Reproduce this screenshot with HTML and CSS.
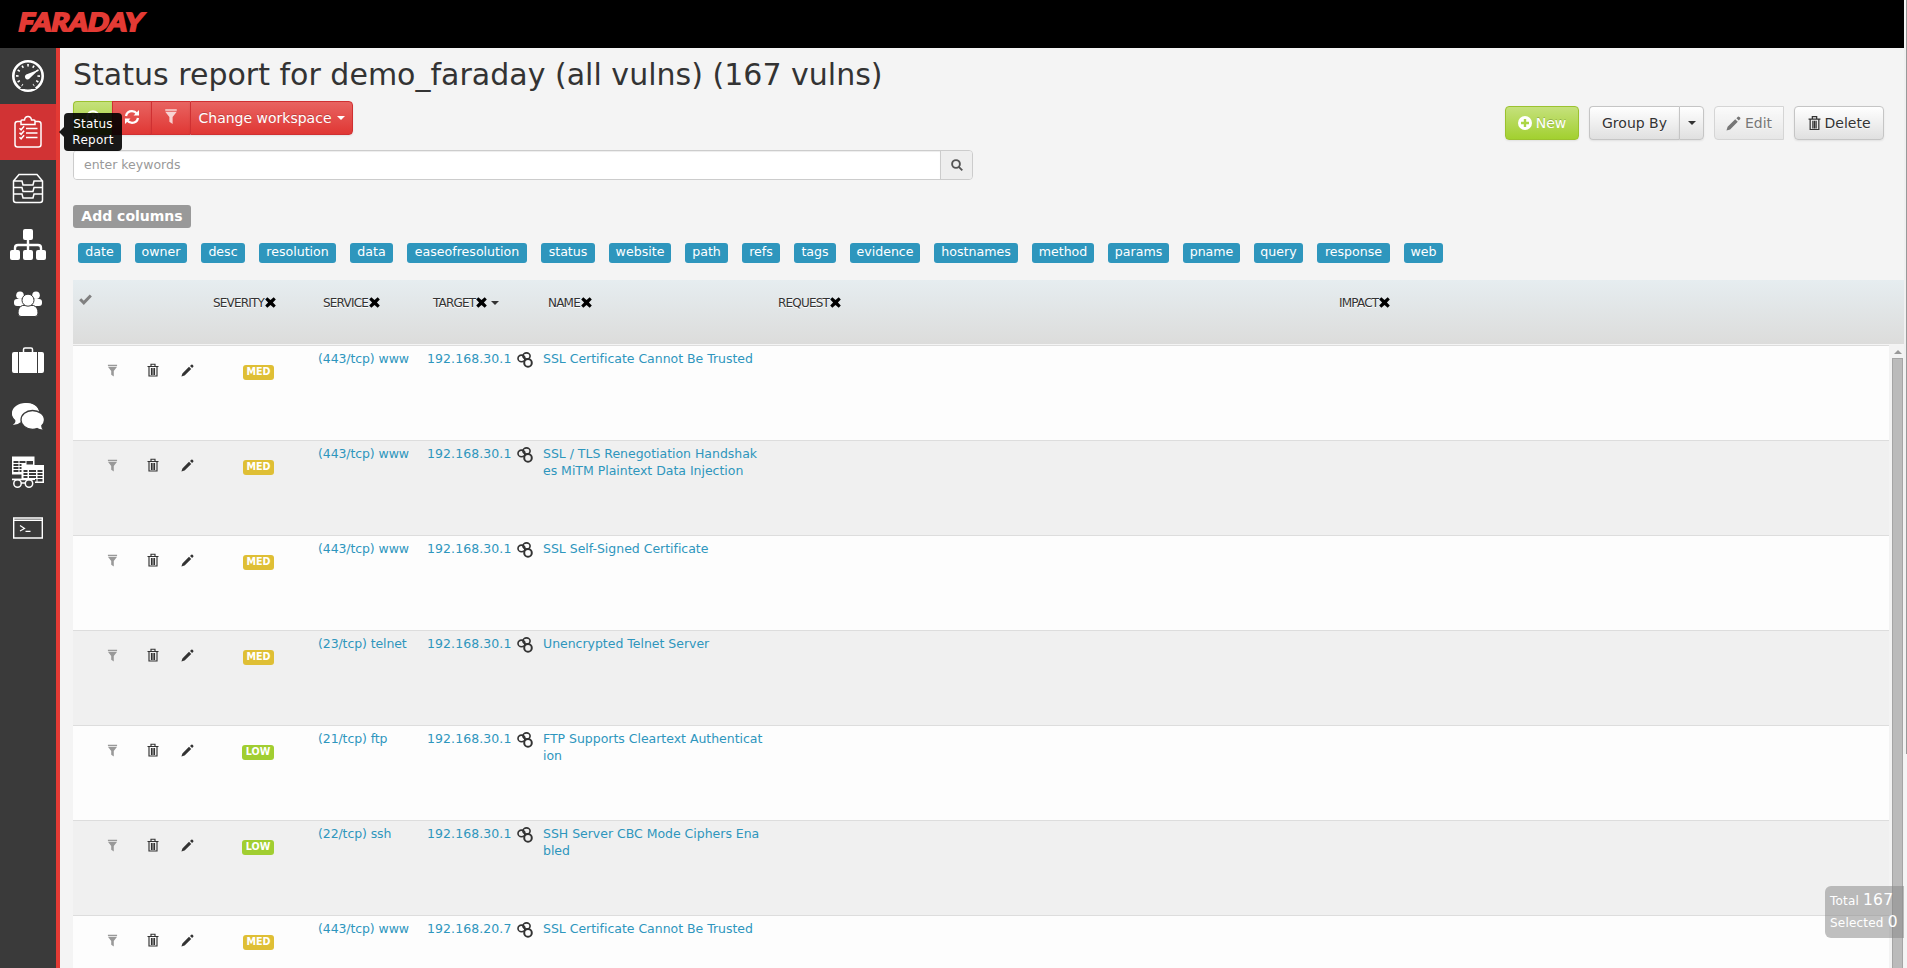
FILE: index.html
```
<!DOCTYPE html>
<html lang="en">
<head>
<meta charset="utf-8">
<title>Faraday - Status Report</title>
<link rel="stylesheet" href="styles.css">
</head>
<body>
<svg class="defs" aria-hidden="true">
  <symbol id="filter" viewBox="0 0 12 13"><path d="M1 .2h10v1.300H1zM1 2.300h10L7.400 7v6L4.600 11V7z"/></symbol>
  <symbol id="trash" viewBox="0 0 12 14"><path fill="none" stroke="currentColor" stroke-width="1.150" d="M.5 3.500h11M4 3V1.200h4V3M2 4v9h8V4M4.500 5v7M6 5v7M7.500 5v7"/></symbol>
  <symbol id="pencil" viewBox="0 0 13 13"><path d="M.4 12.600l1-3.200L8 2.800 10.200 5l-6.600 6.600zM9 1.900l1.300-1.200q.6-.5 1.300.1l.6.600q.6.700.1 1.300L11.100 4z"/></symbol>
  <symbol id="close" viewBox="0 0 11 11"><path d="M2.300.3L5.500 3.100 8.700.3l2.100 2.100-2.900 3.100 2.900 3.100-2.100 2.100-3.200-2.800-3.200 2.800L.2 8.600l2.900-3.100L.2 2.400z"/></symbol>
  <symbol id="link" viewBox="0 0 16 16"><g fill="none" stroke="currentColor"><ellipse cx="4.500" cy="6.400" rx="3.500" ry="3.300" stroke-width="1.600"/><ellipse cx="9.500" cy="4" rx="3.600" ry="3.100" stroke-width="1.600"/><circle cx="11" cy="10.900" r="3.800" stroke-width="2"/></g></symbol>
</svg>
<header class="topbar">
  <svg class="logo" width="130" height="26" viewBox="0 0 130 26"><text x="0" y="22" textLength="124" lengthAdjust="spacingAndGlyphs" transform="skewX(-12) translate(5 0)">FARADAY</text></svg>
</header>
<div class="shell">
  <nav class="side">
    <a><svg width="34" height="34" viewBox="0 0 34 34"><g fill="none" stroke="#fff"><circle cx="17" cy="17" r="14.700" stroke-width="2.600"/><circle cx="17" cy="17" r="10.700" stroke-width="2.600" stroke-dasharray="1.600 4" pathLength="67.200" transform="rotate(-94 17 17)"/></g><path fill="#3a3a3a" d="M9 30l5-7h6l5 7z"/><path fill="#fff" d="M28 10.500L19 19a2.700 2.700 0 1 1-2.500-4z"/></svg></a>
    <a class="on"><svg width="30" height="34" viewBox="0 0 30 34"><g fill="none" stroke="#fff" stroke-width="1.500"><path d="M8 6.500H4.500Q2 6.500 2 9v20.500Q2 32 4.500 32h21q2.500 0 2.500-2.500V9q0-2.500-2.500-2.500H22M8 9.500V6q0-1 1-1h2.500q.5-3.500 3.500-3.500T18.500 5H21q1 0 1 1v3.500zM13 13.500h11.500M13 18h11.500M13 22.500h11.500M6.500 13.200l1.600 1.600 3-3.500M6.500 17.700l1.600 1.600 3-3.500M6.500 22.200l1.600 1.600 3-3.500"/></g></svg></a>
    <a><svg width="32" height="32" viewBox="0 0 32 32"><g fill="none" stroke="#fff" stroke-width="1.500"><path d="M1.500 9L7 2.500h18L30.500 9v19q0 2.500-2.500 2.500H4q-2.500 0-2.500-2.500zM1.500 9H10l1 4h10l1-4h8.500M1.500 15.500H10l1 4h10l1-4h8.500M1.500 22H10l1 4h10l1-4h8.500"/></g></svg></a>
    <a class="tall"><svg width="36" height="32" viewBox="0 0 36 32" fill="#fff"><rect x="13" y="0" width="10" height="11" rx="2"/><rect y="21" width="10" height="10" rx="2"/><rect x="13" y="21" width="10" height="10" rx="2"/><rect x="26" y="21" width="10" height="10" rx="2"/><path fill="none" stroke="#fff" stroke-width="2.400" d="M18 10v11M5 21v-2q0-3 3-3h20q3 0 3 3v2"/></svg></a>
    <a><svg width="28" height="26" viewBox="0 0 28 26" fill="#fff"><circle cx="6" cy="4.200" r="3.800"/><circle cx="22" cy="4.200" r="3.800"/><rect y="8" width="10" height="7" rx="3"/><rect x="18" y="8" width="10" height="7" rx="3"/><g stroke="#3a3a3a" stroke-width="1"><path d="M8.500 14.500h11Q24 16 24 22q0 3.500-3 3.500H7q-3 0-3-3.500 0-6 4.500-7.500z"/><circle cx="14" cy="9.200" r="6"/></g></svg></a>
    <a><svg width="32" height="28" viewBox="0 0 32 28" fill="#fff"><path d="M2 6h4v21H2q-2 0-2-2V8q0-2 2-2zM7 6h18v21H7zM26 6h4q2 0 2 2v17q0 2-2 2h-4z"/><path fill="none" stroke="#fff" stroke-width="1.500" d="M11.500 6V3.500Q11.500 2 13 2h6q1.500 0 1.500 1.500V6"/></svg></a>
    <a><svg width="32" height="28" viewBox="0 0 32 28" fill="#fff"><path d="M13.500 1C21 1 27 5.500 27 11s-6 10-13.500 10q-2.500 0-5-.8Q6 23 .8 22.600 4 21 3.300 18 0 15 0 11 0 5.500 13.500 1z"/><path d="M13.500 1C6 1 0 5.500 0 11q0 4 4 7.200h18Q27 15 27 10C26 4 21 1 13.500 1z"/><path stroke="#3a3a3a" stroke-width="1.300" d="M20.500 8.500C14 8.500 9 12.800 9 18s5 9.300 11.500 9.300q2.500 0 4.500-.8 3 2 7 1.500-2.200-1.500-2.200-4.300Q32.500 21 32.500 18c0-5.200-5.500-9.500-12-9.500z"/></svg></a>
    <a><svg width="32" height="32" viewBox="0 0 32 32"><path fill="#fff" d="M0 .5h22.500V9H32v18H22V24H0z"/><g fill="#3a3a3a"><path d="M1.500 5h5v2h-5zM7.500 5h6v2h-6zM14.500 5H21v3.500h-6.500zM1.500 8h5v2h-5zM1.500 11h5v2h-5zM1.500 14h5v2h-5zM7.500 8h2v2h-2zM7.500 11h2v2h-2zM7.500 14h2v2h-2zM11.500 14h4v2h-4zM17 14h7v2h-7zM25.500 14h5v2h-5zM11.500 17h4v2h-4zM17 17h7v2h-7zM25.500 17h5v2h-5zM11.500 20h4v2h-4zM17 20h7v2h-7zM25.500 20h5v2h-5zM23 23h1.500v2.500H23zM25.500 23h5v2.500h-5zM0 18.500h9.500v4.300H0zM0 24h23v4H0z"/></g><g fill="#3a3a3a" stroke="#fff" stroke-width="1.500"><circle cx="5.500" cy="27.500" r="3.700"/><circle cx="17" cy="27.500" r="3.700"/><path d="M0 23.500h21M9 27h4"/></g></svg></a>
    <a><svg width="30" height="22" viewBox="0 0 30 22"><path fill="none" stroke="#fff" stroke-width="1.400" d="M.7 1h28.600v20H.7zM.7 3.300h28.600"/><path fill="none" stroke="#fff" stroke-width="1.200" d="M7 8.500l4.500 3L7 14M12.500 14.300h5"/></svg></a>
  </nav>
  <main class="main">
    <h2>Status report for demo_faraday (all vulns) (167 vulns)</h2>
    <div class="tools">
      <div class="left">
        <div class="redgroup">
          <button class="btn green"><svg width="14" height="14" viewBox="0 0 14 14"><circle cx="7" cy="7" r="5.800" fill="none" stroke="#fff" stroke-width="2"/><path stroke="#fff" stroke-width="1.500" fill="none" d="M7 3.500V7h3"/></svg></button>
          <button class="btn red"><svg width="16" height="16" viewBox="0 0 16 16"><g fill="none" stroke="#fff" stroke-width="2.300"><path d="M2 7Q3 2.200 8 2.200q3 0 5 2.500M14 9q-1 4.800-6 4.800-3 0-5-2.500"/></g><path fill="#fff" d="M15 1v5.500H9.500zM1 15V9.500h5.500z"/></svg></button>
          <button class="btn red"><svg class="fade" width="14" height="15" fill="#fff"><use href="#filter"/></svg></button>
          <button class="btn red wide">Change workspace<i class="caret"></i></button>
        </div>
        <span class="tip">Status<br>Report</span>
      </div>
      <div class="right">
        <button class="btn new"><svg width="14" height="14" viewBox="0 0 14 14"><circle cx="7" cy="7" r="7" fill="#fff"/><path stroke="#acd645" stroke-width="2.400" d="M7 3v8M3 7h8"/></svg>New</button>
        <div class="split"><button class="btn group">Group By</button><button class="btn drop"><i class="caret"></i></button></div>
        <button class="btn edit"><svg width="15" height="15" fill="currentColor"><use href="#pencil"/></svg>Edit</button>
        <button class="btn del"><svg width="13" height="16"><use href="#trash"/></svg>Delete</button>
      </div>
    </div>
    <div class="search"><div class="field">enter keywords</div><div class="go"><svg width="12" height="12" viewBox="0 0 12 12" fill="none" stroke="#555" stroke-width="1.900"><circle cx="5" cy="5" r="3.900"/><path d="M7.800 7.800l3.500 3.500"/></svg></div></div>
    <span class="addcols">Add columns</span>
    <div class="chips" id="chips"></div>
    <div class="grid">
      <div class="head">
        <span class="c-check"><svg width="13" height="11" viewBox="0 0 13 11"><path fill="none" stroke="#808080" stroke-width="3" d="M1.200 5.200l3.600 3.600 7-7.300"/></svg></span>
        <span class="c-sev">SEVERITY<svg width="11" height="11"><use href="#close"/></svg></span>
        <span class="c-svc">SERVICE<svg width="11" height="11"><use href="#close"/></svg></span>
        <span class="c-tgt">TARGET<svg width="11" height="11"><use href="#close"/></svg><i class="caret"></i></span>
        <span class="c-name">NAME<svg width="11" height="11"><use href="#close"/></svg></span>
        <span class="c-req">REQUEST<svg width="11" height="11"><use href="#close"/></svg></span>
        <span class="c-imp">IMPACT<svg width="11" height="11"><use href="#close"/></svg></span>
      </div>
      <div class="body">
        <div class="rows" id="rows"></div>
        <div class="scroll"><i class="up"></i><i class="thumb"></i></div>
      </div>
    </div>
  </main>
  <div class="pagescroll"></div>
</div>
<div class="stats"><div>Total <b>167</b></div><div>Selected <b>0</b></div></div>
<script src="app.js"></script>
</body>
</html>
```
FILE: styles.css
```
* { box-sizing: border-box; }
html, body { height: 100%; overflow: hidden; }
body { margin: 0; background: linear-gradient(#999, #999) right top / 1px 754px no-repeat #f4f4f4; color: #333; font-family: "DejaVu Sans", sans-serif; font-size: 13px; }
svg { display: block; flex: none; }
.defs { position: absolute; width: 0; height: 0; }
.topbar { height: 48px; margin-right: 3px; background: #000; padding: 9px 0 0 17px; }
.logo { overflow: visible; }
.logo text { font: 900 25px Lato, "DejaVu Sans", sans-serif; fill: #e33a34; stroke: #e33a34; stroke-width: 1.8px; }
.shell { display: flex; height: 920px; }
.side { width: 60px; flex: none; background: #3a3a3a; border-right: 4px solid #e33a34; }
.side a { display: flex; height: 56px; align-items: center; justify-content: center; }
.side .tall { height: 60px; padding-bottom: 2px; }
.side .on { background: #d13334; }
.main { flex: 1; padding-left: 13px; min-width: 0; display: flex; flex-direction: column; }
.pagescroll { width: 3px; flex: none; background: #f0f0f0; border-right: 1px solid #999; height: 706px; }
h2 { margin: 7px 0 0; font-size: 30px; font-weight: 400; line-height: 40px; height: 46px; white-space: nowrap; letter-spacing: .015px; }
.tools { display: flex; justify-content: space-between; height: 49px; padding-right: 20px; }
.left { position: relative; }
.redgroup { display: flex; height: 34px; }
.btn { font: 14px "DejaVu Sans", sans-serif; height: 34px; display: flex; align-items: center; justify-content: center; gap: 4px; padding: 0; border: 1px solid #c5c5c5; border-radius: 4px; background: linear-gradient(#fff, #e0e0e0); color: #333; text-shadow: 0 1px 1px rgba(255,255,255,.75); box-shadow: 0 1px 2px rgba(0,0,0,.08); white-space: nowrap; }
.green, .new { background: linear-gradient(#c5e17c, #a2d02f); border-color: #9bc22f; color: #fff; text-shadow: 0 -1px 0 rgba(0,0,0,.2); }
.green { width: 39px; border-radius: 4px 0 0 4px; border-right: 0; padding-bottom: 3px; }
.red { width: 39px; background: linear-gradient(#e86461, #e03734); border-color: #cf3032; border-right: 0; border-radius: 0; color: #fff; text-shadow: 0 -1px 0 rgba(0,0,0,.2); padding-bottom: 3px; }
.fade { opacity: .75; }
.wide { width: 163px; border-right: 1px solid #cf3032; border-radius: 0 4px 4px 0; gap: 5px; padding-bottom: 0; }
.caret { display: inline-block; width: 0; height: 0; border: 4px solid transparent; border-top-color: currentColor; border-bottom: 0; }
.tip { position: absolute; left: -9px; top: 12px; width: 58px; height: 38px; border-radius: 4px; background: rgba(0,0,0,.9); color: #fff; font-size: 12px; letter-spacing: .25px; line-height: 16px; padding: 3px 0; text-align: center; }
.tip::before { content: ""; position: absolute; left: -5px; top: 14px; border: 5px solid transparent; border-left: 0; border-right-color: rgba(0,0,0,.9); }
.right { display: flex; padding-top: 5px; }
.new { width: 74px; margin-right: 10px; }
.split { display: flex; margin-right: 10px; }
.group { width: 90px; border-radius: 4px 0 0 4px; border-right: 0; }
.drop { width: 25px; border-radius: 0 4px 4px 0; }
.edit { width: 70px; margin-right: 10px; opacity: .65; border-radius: 4px 0 0 4px; box-shadow: none; }
.del { width: 90px; }
.search { display: flex; width: 900px; height: 30px; border: 1px solid #ccc; border-radius: 4px; overflow: hidden; }
.field { flex: 1; background: #fff; color: #999; font-size: 12.5px; line-height: 28px; padding-left: 10px; box-shadow: inset 0 1px 1px rgba(0,0,0,.075); }
.go { width: 32px; border-left: 1px solid #ccc; background: #eee; display: flex; align-items: center; justify-content: center; }
.addcols { align-self: flex-start; margin-top: 25px; width: 118px; height: 23px; border-radius: 3px; background: #999; color: #fff; font-size: 14px; font-weight: 700; line-height: 22px; text-align: center; white-space: nowrap; }
.chips { display: flex; gap: 14px; margin: 15px 0 17px 5px; }
.chip { height: 20px; border-radius: 3px; background: #2e96bd; color: #fff; font-size: 12.6px; line-height: 18px; text-align: center; white-space: nowrap; }
.head { position: relative; display: flex; height: 64px; background: linear-gradient(#e6edf0, #dcdcdb); text-shadow: 0 1px 0 #fff; font-size: 12px; letter-spacing: -.8px; color: #333; }
.head span { display: flex; height: 44px; padding-top: 1px; align-items: center; white-space: nowrap; flex: none; }
.head svg { color: #000; margin-left: 1px; }
.head .caret { margin-left: 4px; }
.c-check { width: 140px; padding: 0 0 6px 5px !important; }
.c-sev { width: 110px; }
.c-svc { width: 110px; }
.c-tgt { width: 115px; }
.c-name { width: 230px; }
.c-req { width: 561px; }
.grid { flex: 1; min-height: 0; overflow: hidden; display: flex; flex-direction: column; }
.body { display: flex; flex: 1; padding-top: 1px; overflow: hidden; }
.rows { width: 1816px; flex: none; }
.row { display: flex; height: 95px; border-top: 1px solid #ddd; background: #fdfdfd; color: #2e96bd; font-size: 12.5px; line-height: 17px; padding-top: 4px; }
.row:nth-child(even) { background: #f0f0f0; }
.acts { display: flex; width: 170px; color: #333; padding: 14px 0 0 34px; }
.acts .f { fill: #999; margin-right: 29px; }
.acts .t { margin: -1px 22px 0 0; }
.badge { width: 31px; height: 15px; margin: 15px 44px 0 0; border-radius: 3px; background: #dfbf35; color: #fff; font-size: 9.6px; font-weight: 700; line-height: 14px; text-align: center; }
.badge.low { background: #a1ce31; width: 32px; margin-left: -1px; }
.svc { width: 109px; white-space: nowrap; letter-spacing: -.1px; }
.tgt { width: 116px; display: flex; white-space: nowrap; }
.tgt span { width: 90px; letter-spacing: .08px; }
.tgt svg { color: #333; margin-top: 2px; }
.name { white-space: pre; letter-spacing: -.02px; }
.scroll { width: 15px; margin-left: 0; padding: 5px 0 0 2px; background: #f3f3f3; display: flex; flex-direction: column; align-items: center; }
.up { border: 4px solid transparent; border-bottom-color: #999; border-top: 0; margin-bottom: 4px; }
.thumb { flex: 1; width: 11px; background: #bbb; border: 1px solid #a5a5a5; border-bottom: 0; }
.stats { position: absolute; left: 1825px; top: 886px; width: 79px; height: 52px; border-radius: 6px 0 0 6px; background: rgba(136,136,136,.53); color: #fff; font-size: 12px; letter-spacing: .2px; line-height: 21px; padding: 4px 5px; white-space: nowrap; }
.stats b { font-weight: 400; font-size: 15.5px; }
```
FILE: app.js
```
const chips = [["date",43],["owner",52],["desc",44],["resolution",77],["data",43],["easeofresolution",120],["status",54],["website",62],["path",43],["refs",38],["tags",42],["evidence",70],["hostnames",84],["method",62],["params",61],["pname",57],["query",49],["response",73],["web",39]];
document.getElementById("chips").innerHTML = chips.map(([t, w]) => `<span class="chip" style="width:${w}px">${t}</span>`).join("");
const rows = [
  ["MED", "(443/tcp) www", "192.168.30.1", "SSL Certificate Cannot Be Trusted"],
  ["MED", "(443/tcp) www", "192.168.30.1", "SSL / TLS Renegotiation Handshak\nes MiTM Plaintext Data Injection"],
  ["MED", "(443/tcp) www", "192.168.30.1", "SSL Self-Signed Certificate"],
  ["MED", "(23/tcp) telnet", "192.168.30.1", "Unencrypted Telnet Server"],
  ["LOW", "(21/tcp) ftp", "192.168.30.1", "FTP Supports Cleartext Authenticat\nion"],
  ["LOW", "(22/tcp) ssh", "192.168.30.1", "SSH Server CBC Mode Ciphers Ena\nbled"],
  ["MED", "(443/tcp) www", "192.168.20.7", "SSL Certificate Cannot Be Trusted"]
];
document.getElementById("rows").innerHTML = rows.map(([s, v, t, n]) => `<div class="row">
  <div class="acts"><svg class="f" width="11" height="13"><use href="#filter"/></svg><svg class="t" width="12" height="14"><use href="#trash"/></svg><svg width="13" height="13" fill="#333"><use href="#pencil"/></svg></div>
  <span class="badge ${s.toLowerCase()}">${s}</span><span class="svc">${v}</span>
  <div class="tgt"><span>${t}</span><svg width="16" height="16"><use href="#link"/></svg></div>
  <div class="name">${n}</div></div>`).join("");
```
